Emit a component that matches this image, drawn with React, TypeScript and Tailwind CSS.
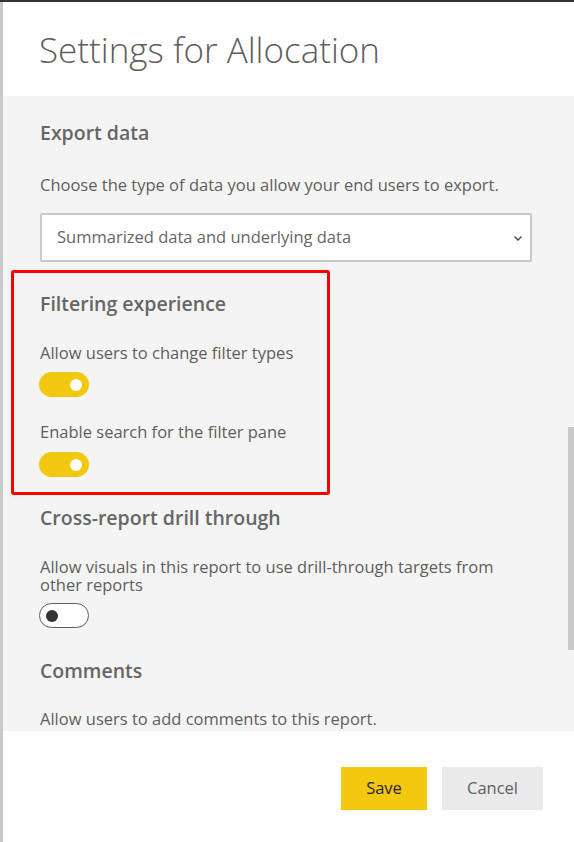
import React from 'react';

function Toggle({ on }: { on: boolean }) {
  if (on) {
    return (
      <div className="-ml-px w-[50px] h-[25px] rounded-full bg-[#f2c811] flex items-center justify-end pr-[7px]">
        <div className="w-[12px] h-[12px] rounded-full bg-white" />
      </div>
    );
  }
  return (
    <div className="-ml-px w-[50px] h-[25px] rounded-full border border-[#605e5c] bg-white flex items-center pl-[6px]">
      <div className="w-[12px] h-[12px] rounded-full bg-[#333]" />
    </div>
  );
}

export default function App() {
  return (
    <div
      className="relative w-[574px] h-[842px] bg-white overflow-hidden text-[#605e5c]"
      style={{ fontFamily: '"Open Sans", "Noto Sans", sans-serif' }}
    >
      <div className="h-[2px] bg-[#333]" />
      <div className="flex h-[840px]">
        <div className="w-[3px] bg-[#c8c8c8]" />
        <div className="flex-1 flex flex-col">
          {/* header */}
          <div className="h-[94px] pl-[36px] pt-[26px]">
            <h1 className="text-[35px] font-light leading-[44px] text-[#605e5c]">
              Settings for Allocation
            </h1>
          </div>

          {/* scrolling body */}
          <div className="h-[635px] bg-[#f4f4f4] pl-[37px] pr-[37px] pt-[25px] overflow-hidden text-[16.5px]">
            <h2 className="text-[19.5px] font-semibold leading-[24px] text-[#666]">Export data</h2>
            <p className="mt-[30px] leading-[20px]">
              Choose the type of data you allow your end users to export.
            </p>
            <div className="mt-[18px] h-[49px] w-[492px] border-2 border-[#c8c8c8] bg-white flex items-center justify-between pl-[15px] pr-[6px] rounded-[2px]">
              <span className="text-[#666]">Summarized data and underlying data</span>
              <svg width="12" height="12" viewBox="0 0 12 12" fill="none">
                <path d="M2.5 4.5l3.5 3.5 3.5-3.5" stroke="#444" strokeWidth="1.4" />
              </svg>
            </div>

            <h2 className="mt-[30px] text-[19.5px] font-semibold leading-[24px] text-[#666]">Filtering experience</h2>
            <p className="mt-[27px] leading-[20px]">Allow users to change filter types</p>
            <div className="mt-[9px]"><Toggle on /></div>
            <p className="mt-[25px] leading-[20px]">Enable search for the filter pane</p>
            <div className="mt-[10px]"><Toggle on /></div>

            <h2 className="mt-[29px] text-[19.5px] font-semibold leading-[24px] text-[#666]">Cross-report drill through</h2>
            <p className="mt-[28px] leading-[18px]">
              Allow visuals in this report to use drill-through targets from other reports
            </p>
            <div className="mt-[9px]"><Toggle on={false} /></div>

            <h2 className="mt-[31px] text-[19.5px] font-semibold leading-[24px] text-[#666]">Comments</h2>
            <p className="mt-[26px] leading-[20px]">Allow users to add comments to this report.</p>
          </div>

          {/* footer */}
          <div className="flex-1 flex justify-end items-start pt-[36px] pr-[31px] gap-[15px]">
            <button className="w-[86px] h-[43px] bg-[#f2c811] text-[16.5px] text-[#252423]">Save</button>
            <button className="w-[101px] h-[43px] bg-[#eaeaea] text-[16.5px] text-[#605e5c]">Cancel</button>
          </div>
        </div>
      </div>

      {/* scrollbar */}
      <div className="absolute left-[568px] top-[427px] w-[6px] h-[223px] bg-[#c8c8c8]" />
      {/* annotation */}
      <div className="absolute left-[11px] top-[270px] w-[319px] h-[225px] border-[3px] border-[#ff0000] rounded-[3px]" />
    </div>
  );
}
